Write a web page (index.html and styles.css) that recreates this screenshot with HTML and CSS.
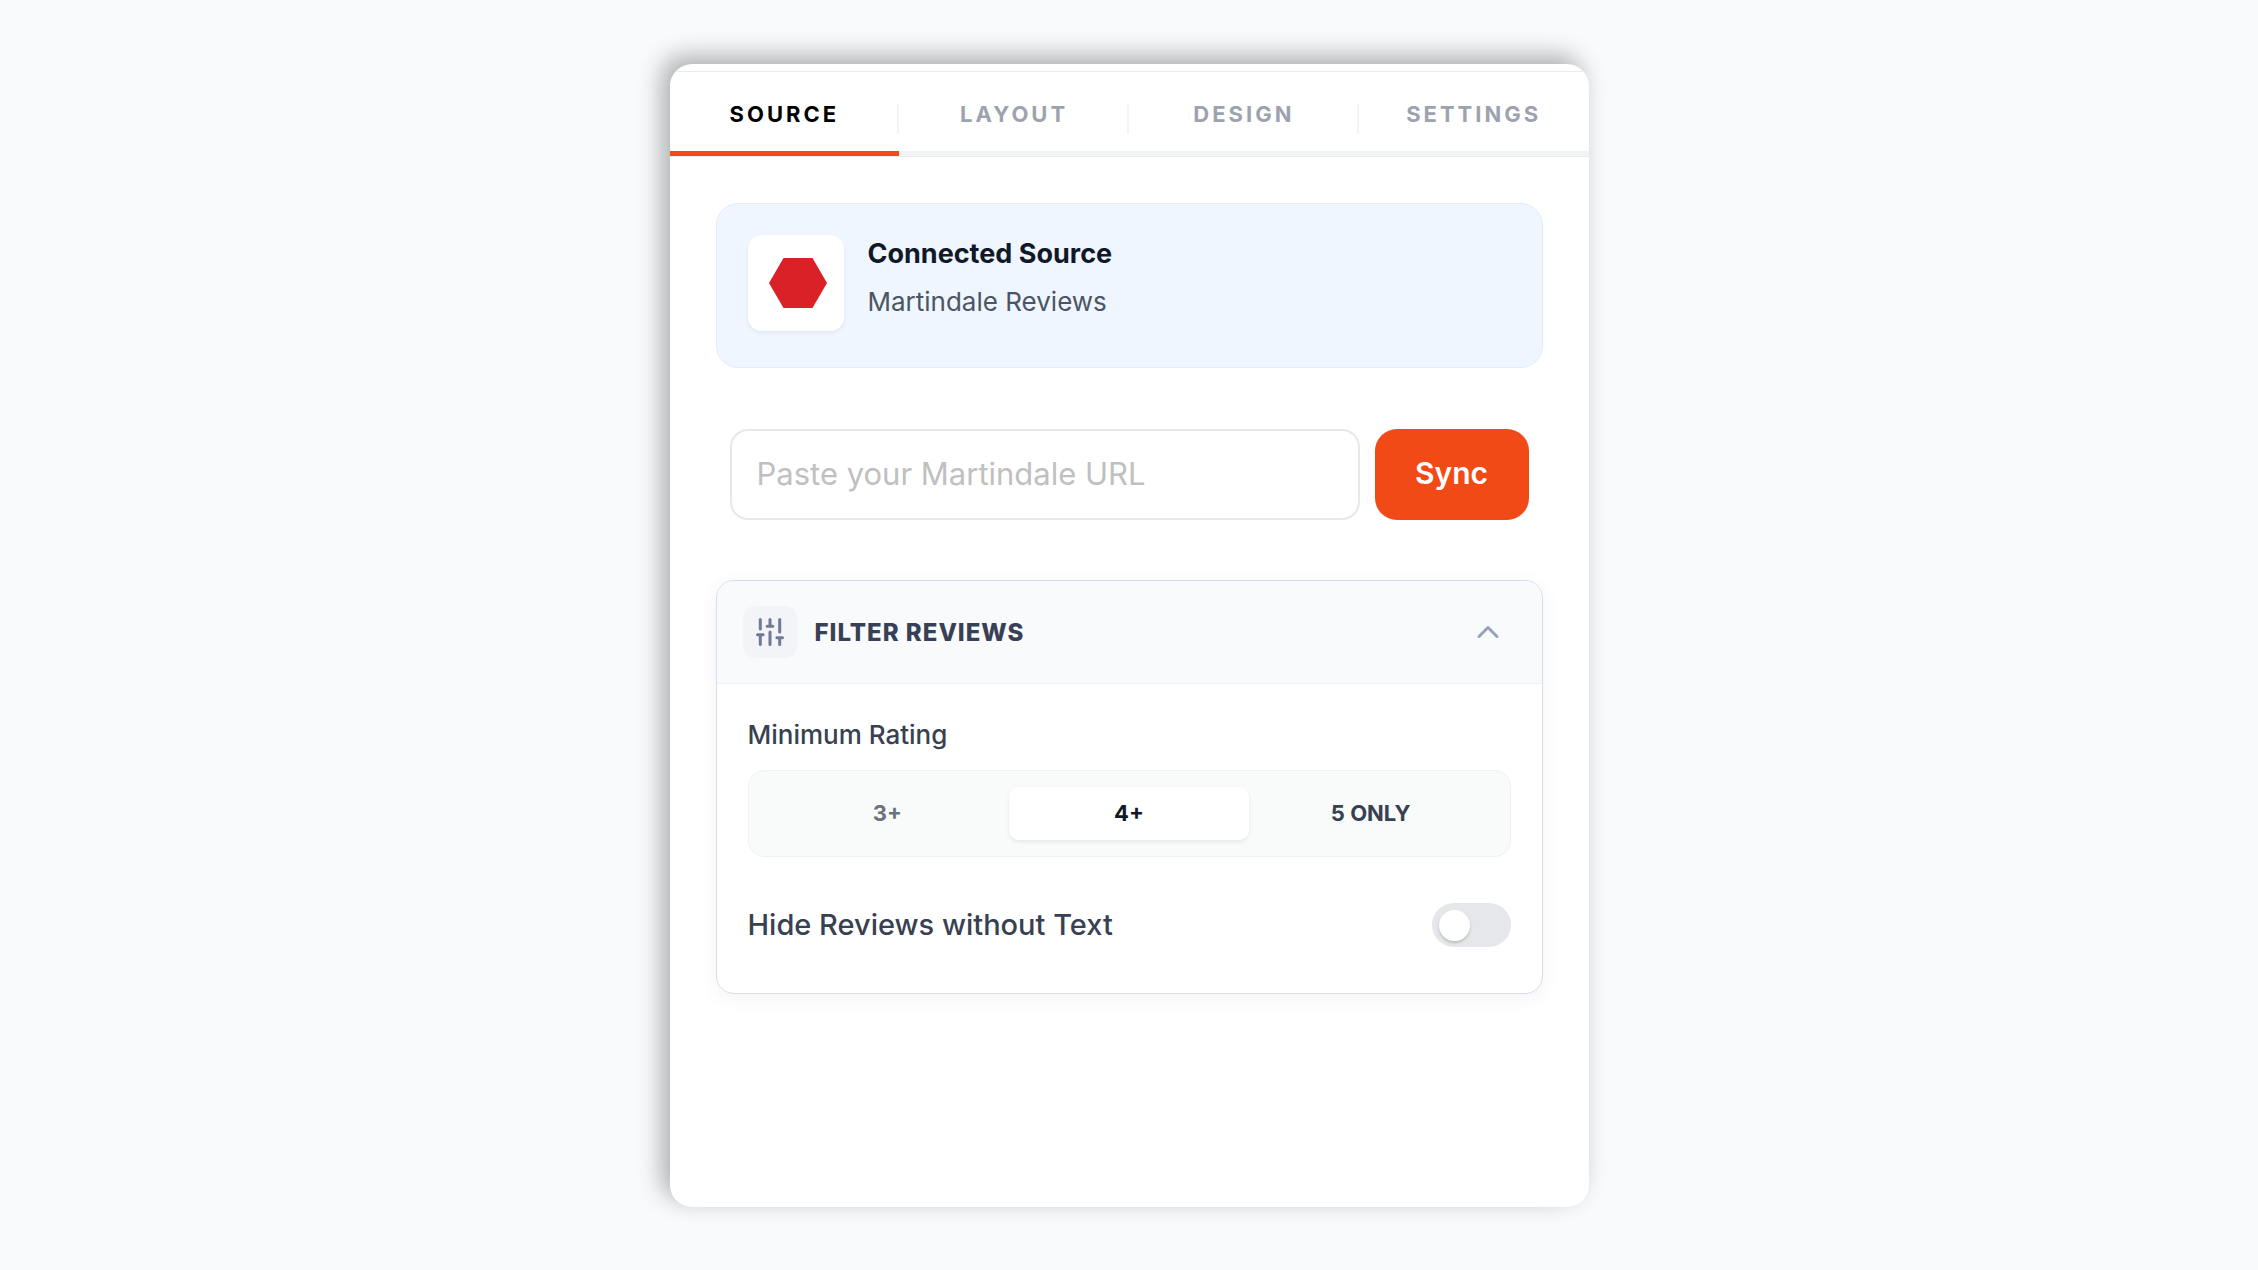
FILE: index.html
```html
<!DOCTYPE html>
<html lang="en">
<head>
    <meta charset="UTF-8">
    <meta name="viewport" content="width=device-width, initial-scale=1.0">
    <title>Review Widget</title>
    <link rel="stylesheet" href="styles.css">
</head>
<body>
    <main class="panel">
        <!-- Tabs -->
        <nav class="tabs">
            <button type="button" class="tab active">SOURCE</button>
            <button type="button" class="tab">LAYOUT</button>
            <button type="button" class="tab">DESIGN</button>
            <button type="button" class="tab">SETTINGS</button>
        </nav>

        <div class="content">
            <!-- Connected source -->
            <section class="source-card">
                <div class="source-logo">
                    <svg width="58" height="50" viewBox="0 0 58 50" aria-hidden="true">
                        <path d="M14.500 0h29L58 25 43.500 50h-29L0 25z" fill="#da2128"/>
                    </svg>
                </div>
                <div class="source-text">
                    <h2>Connected Source</h2>
                    <p>Martindale Reviews</p>
                </div>
            </section>

            <!-- Profile URL -->
            <form class="sync-form">
                <input type="text" class="url-input" aria-label="Martindale URL" placeholder="Paste your Martindale URL">
                <button type="button" class="sync-button">Sync</button>
            </form>

            <!-- Filters -->
            <section class="filter-card">
                <button type="button" class="filter-header" aria-expanded="true">
                    <span class="filter-icon">
                        <svg width="28" height="28" viewBox="0 0 28 28" fill="none" stroke="#717a94" stroke-width="3" stroke-linecap="round" aria-hidden="true">
                            <path d="M4.300 1.500V11M4.300 16.700v9.800M1.500 16.700h5.600M14 1.500v6.800M14 14v12.500M11.200 8.300h5.600M23.700 1.500V14M23.700 19.700v6.800M20.900 19.700h5.600"/>
                        </svg>
                    </span>
                    <span class="filter-title">FILTER REVIEWS</span>
                    <svg width="36" height="36" viewBox="0 0 24 24" fill="none" stroke="#98a2b8" stroke-width="2" stroke-linecap="round" stroke-linejoin="round" aria-hidden="true">
                        <path d="M18 15l-6-6-6 6"/>
                    </svg>
                </button>
                <div class="filter-body">
                    <h3>Minimum Rating</h3>
                    <div class="ratings">
                        <button type="button" class="rating muted">3+</button>
                        <button type="button" class="rating selected">4+</button>
                        <button type="button" class="rating">5 ONLY</button>
                    </div>
                    <div class="toggle-row">
                        <label for="hide-empty">Hide Reviews without Text</label>
                        <input type="checkbox" id="hide-empty" class="toggle">
                    </div>
                </div>
            </section>
        </div>
    </main>
</body>
</html>
```
FILE: styles.css
```css
* {
    box-sizing: border-box;
}

body {
    margin: 0;
    min-height: 100vh;
    padding: 64px 24px 63px;
    display: flex;
    justify-content: center;
    background-color: #f8fafc;
    font-family: Inter, sans-serif;
    color: #374151;
}

button,
input {
    font-family: inherit;
    margin: 0;
}

button {
    border: none;
    padding: 0;
    background: none;
    color: inherit;
    cursor: pointer;
}

h2,
h3,
p {
    margin: 0;
}

.panel {
    width: 100%;
    max-width: 919px;
    padding-top: 7px;
    background-color: #fff;
    border-radius: 22px;
    box-shadow: -8px -8px 24px rgba(0, 0, 0, 0.31);
    overflow: hidden;
}

/* Tabs */
.tabs {
    display: grid;
    grid-template-columns: repeat(4, 1fr);
    border-top: 1px solid #e9eaec;
    border-bottom: 1px solid #e8eaec;
}

.tab {
    position: relative;
    height: 84px;
    padding-top: 4px;
    border-bottom: 5px solid #f3f4f6;
    font-size: 22px;
    line-height: 28px;
    font-weight: 700;
    letter-spacing: 3px;
    color: #9ca3af;
}

.tab.active {
    color: #000;
    border-bottom-color: #f64a14;
}

/* Separator between two tabs */
.tab:not(:last-child)::after {
    content: "";
    position: absolute;
    right: 0;
    top: 32px;
    width: 2px;
    height: 30px;
    background-color: #f3f4f6;
}

.content {
    padding: 46px;
}

/* Connected source */
.source-card {
    display: flex;
    gap: 24px;
    padding: 31px;
    height: 165px;
    background-color: #eff6ff;
    border: 1px solid #e1edfe;
    border-radius: 22px;
}

.source-logo {
    display: flex;
    align-items: center;
    justify-content: center;
    width: 96px;
    height: 96px;
    padding-left: 4px;
    background-color: #fff;
    border-radius: 14px;
    box-shadow: 0 2px 4px rgba(0, 0, 0, 0.06);
}

.source-text h2 {
    font-size: 27px;
    line-height: 38px;
    font-weight: 700;
    color: #111827;
}

.source-text p {
    margin-top: 10px;
    font-size: 26px;
    line-height: 38px;
    color: #4b5563;
}

/* URL input and button */
.sync-form {
    display: flex;
    gap: 15px;
    padding: 61px 14px 60px;
}

.url-input {
    flex: 1;
    min-width: 0;
    height: 91px;
    padding: 0 25px 2px;
    border: 2px solid #e8e8e8;
    border-radius: 18px;
    font-size: 31px;
    color: #374151;
    background-color: #fff;
}

.url-input::placeholder {
    color: #c0c0c0;
    opacity: 1;
}

.sync-button {
    width: 154px;
    height: 91px;
    padding-bottom: 3px;
    border-radius: 22px;
    background-color: #f24a16;
    font-size: 30px;
    font-weight: 600;
    color: #fff;
}

/* Filters */
.filter-card {
    border: 1px solid #d8deea;
    border-radius: 18px;
    background-color: #fff;
    box-shadow: 0 4px 20px rgba(0, 0, 0, 0.05);
    overflow: hidden;
}

.filter-header {
    display: flex;
    align-items: center;
    width: 100%;
    height: 103px;
    padding: 0 36px 0 26px;
    border-bottom: 1px solid #edf2f7;
    background-color: #f9fafc;
    text-align: left;
}

.filter-icon {
    display: flex;
    align-items: center;
    justify-content: center;
    width: 54px;
    height: 52px;
    margin-right: 18px;
    border-radius: 12px;
    background-color: #f3f4f8;
}

.filter-title {
    flex: 1;
    font-size: 24px;
    font-weight: 800;
    letter-spacing: 1px;
    color: #374056;
}

.filter-body {
    padding: 32px 31px 46px;
}

.filter-body h3 {
    font-size: 26px;
    line-height: 38px;
    font-weight: 500;
}

.ratings {
    display: grid;
    grid-template-columns: repeat(3, 1fr);
    gap: 2px;
    margin: 16px 0 46px;
    padding: 16px 19px;
    border: 1px solid #f0f2f2;
    border-radius: 16px;
    background-color: #f9fbfa;
}

.rating {
    height: 53px;
    padding-bottom: 2px;
    border-radius: 10px;
    font-size: 22px;
    font-weight: 700;
    color: #374151;
}

.rating.muted {
    color: #6b7280;
}

.rating.selected {
    background-color: #fff;
    color: #111827;
    box-shadow: 0 2px 4px rgba(0, 0, 0, 0.08);
}

.toggle-row {
    display: flex;
    align-items: center;
    justify-content: space-between;
    font-size: 29px;
    line-height: 44px;
    font-weight: 500;
}

/* Toggle switch */
.toggle {
    appearance: none;
    display: flex;
    align-items: center;
    width: 79px;
    height: 44px;
    padding: 0 7px;
    border-radius: 22px;
    background-color: #e5e7eb;
    cursor: pointer;
}

.toggle::before {
    content: "";
    width: 31px;
    height: 31px;
    border-radius: 50%;
    background-color: #fff;
    box-shadow: 0 2px 3px rgba(0, 0, 0, 0.18);
}

.toggle:checked {
    justify-content: flex-end;
    background-color: #f24a16;
}
```
